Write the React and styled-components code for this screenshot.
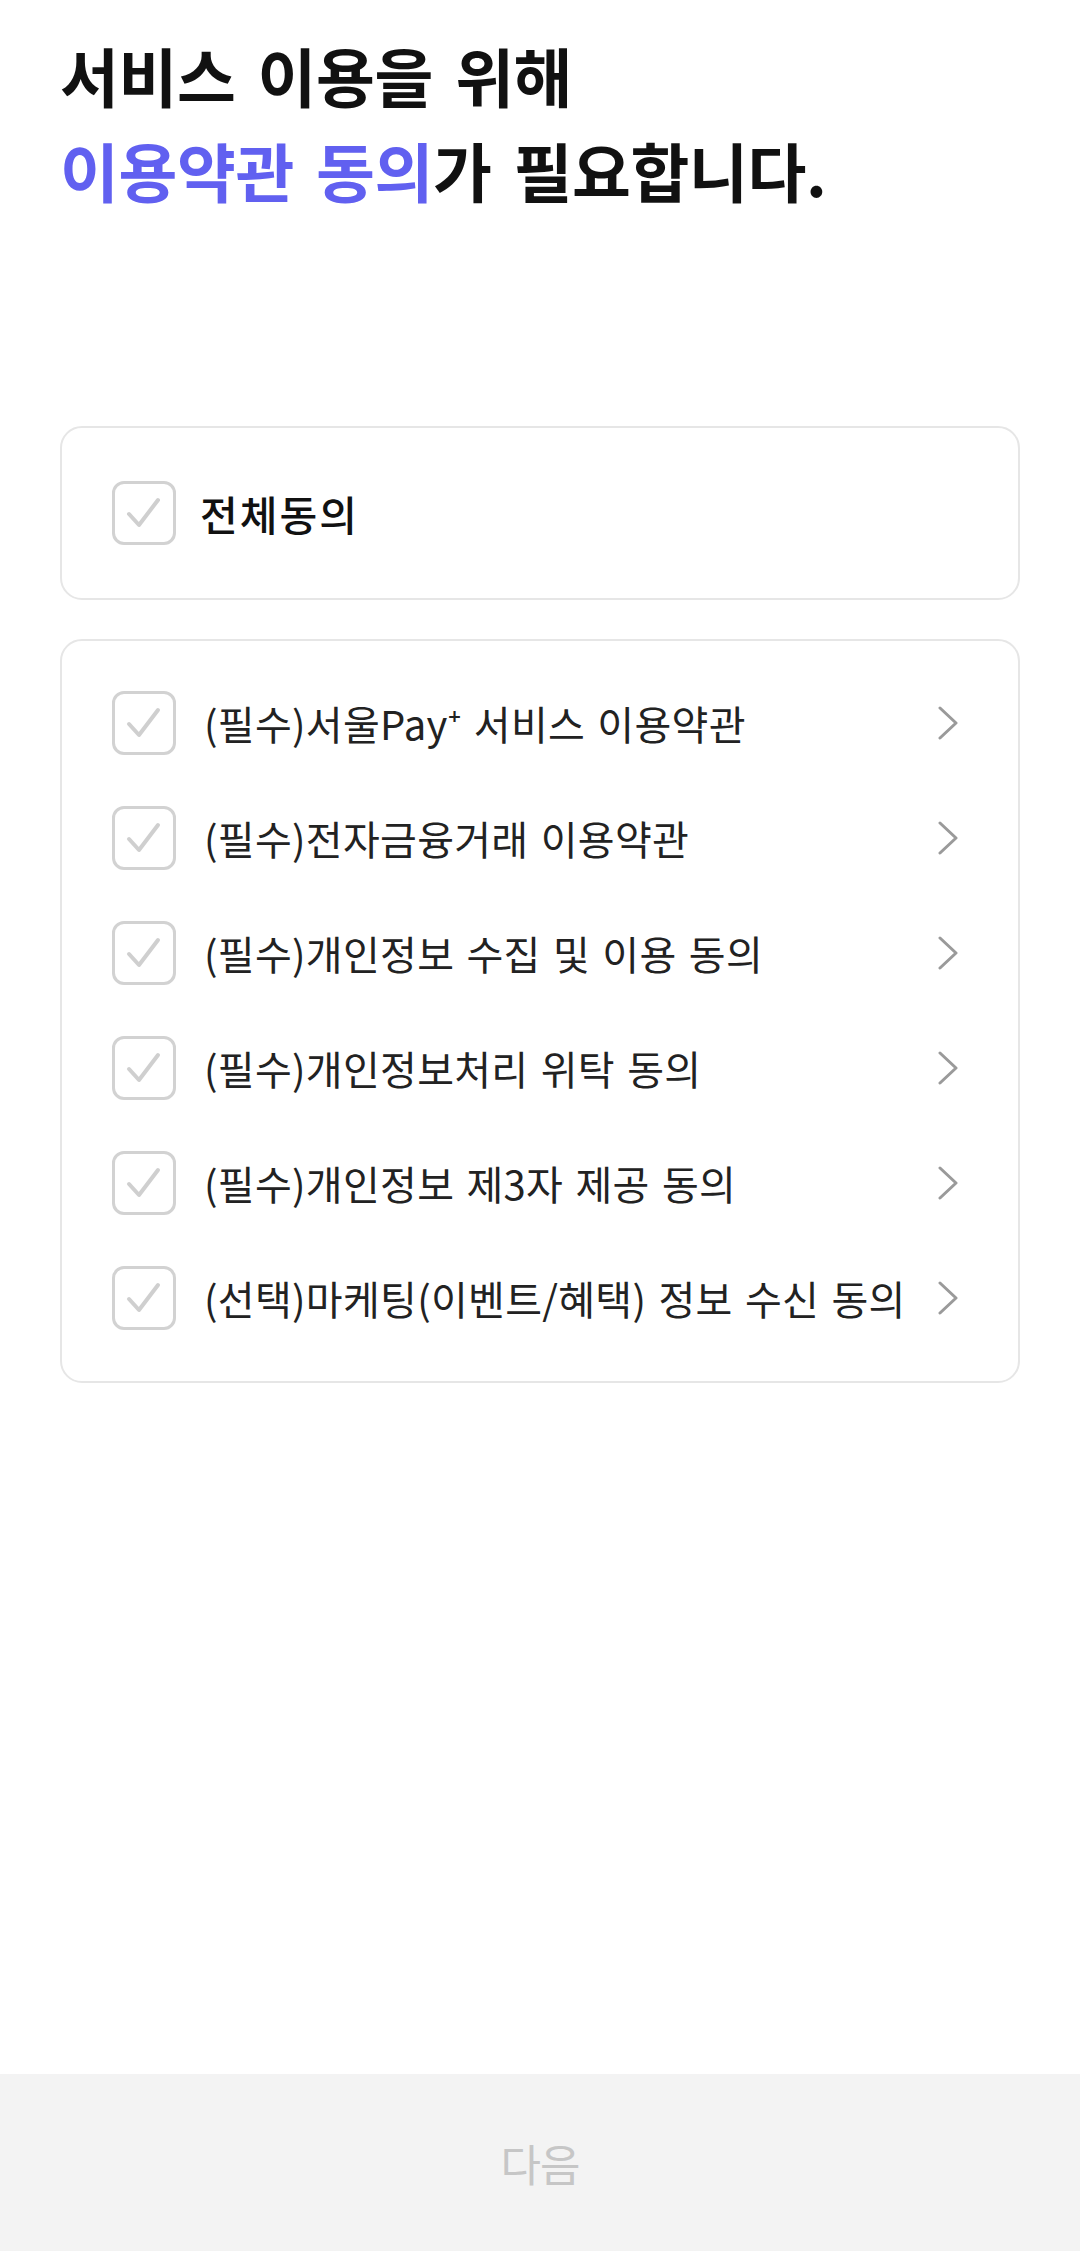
import React from 'react'
import styled, { createGlobalStyle } from 'styled-components'

const terms = [
  '(필수)서울Pay⁺ 서비스 이용약관',
  '(필수)전자금융거래 이용약관',
  '(필수)개인정보 수집 및 이용 동의',
  '(필수)개인정보처리 위탁 동의',
  '(필수)개인정보 제3자 제공 동의',
  '(선택)마케팅(이벤트/혜택) 정보 수신 동의',
];

const CheckBox = () => (
  <CheckFrame>
    <svg width="58" height="58" viewBox="0 0 58 58">
      <polyline points="14,30 24,41 43,16" fill="none" stroke="#cfcfcf" strokeWidth="4" strokeLinecap="round" strokeLinejoin="round" />
    </svg>
  </CheckFrame>
);

const Chevron = () => (
  <svg width="22" height="34" viewBox="0 0 22 34">
    <polyline points="3,2 19,17 3,32" fill="none" stroke="#9a9a9a" strokeWidth="3" strokeLinecap="round" strokeLinejoin="round" />
  </svg>
);

const App = () => {
  return (
    <Page>
      <GlobalStyle />
      <Content>
        <Title>
          서비스 이용을 위해
          <br />
          <Accent>이용약관 동의</Accent>가 필요합니다.
        </Title>

        <AllCard>
          <CheckBox />
          <AllLabel>전체동의</AllLabel>
        </AllCard>

        <ListCard>
          {terms.map((t) => (
            <TermRow key={t}>
              <CheckBox />
              <TermLabel>{t}</TermLabel>
              <Chevron />
            </TermRow>
          ))}
        </ListCard>
      </Content>

      <NextButton>다음</NextButton>
    </Page>
  )
}

export default App;

const GlobalStyle = createGlobalStyle`
  html, body {
    margin: 0;
    padding: 0;
    background: #ffffff;
  }
  body {
    font-family: "Noto Sans CJK KR", "Noto Sans", sans-serif;
  }
`;

const Page = styled.div`
  min-height: 100vh;
  display: flex;
  flex-direction: column;
  background: #ffffff;
`;

const Content = styled.div`
  padding: 27px 60px 0;
  display: flex;
  flex-direction: column;
`;

const Title = styled.h1`
  margin: 0;
  font-size: 64px;
  line-height: 95px;
  font-weight: 700;
  letter-spacing: -0.4px;
  word-spacing: 8px;
  color: #111111;
`;

const Accent = styled.span`
  color: #6160f0;
`;

const AllCard = styled.div`
  margin-top: 209px;
  height: 174px;
  box-sizing: border-box;
  border: 2px solid #e6e6e6;
  border-radius: 22px;
  padding: 0 50px;
  display: flex;
  align-items: center;
  gap: 24px;
`;

const AllLabel = styled.span`
  font-size: 41px;
  font-weight: 500;
  letter-spacing: 2px;
  color: #111111;
`;

const ListCard = styled.div`
  margin-top: 39px;
  box-sizing: border-box;
  border: 2px solid #e6e6e6;
  border-radius: 22px;
  padding: 24px 59px 26px 50px;
  display: flex;
  flex-direction: column;
`;

const TermRow = styled.div`
  height: 115px;
  display: flex;
  align-items: center;
  gap: 28px;

  svg:last-child {
    margin-left: auto;
    flex-shrink: 0;
  }
`;

const TermLabel = styled.span`
  font-size: 40px;
  font-weight: 400;
  letter-spacing: 0.3px;
  word-spacing: 3px;
  color: #222222;
  white-space: nowrap;
`;

const CheckFrame = styled.div`
  width: 64px;
  height: 64px;
  box-sizing: border-box;
  border: 3px solid #d2d2d2;
  border-radius: 12px;
  display: flex;
  align-items: center;
  justify-content: center;
  flex-shrink: 0;
`;

const NextButton = styled.div`
  margin-top: auto;
  height: 177px;
  background: #f3f3f3;
  display: flex;
  align-items: center;
  justify-content: center;
  font-size: 44px;
  font-weight: 400;
  letter-spacing: -1px;
  color: #c6c6c6;
`;
